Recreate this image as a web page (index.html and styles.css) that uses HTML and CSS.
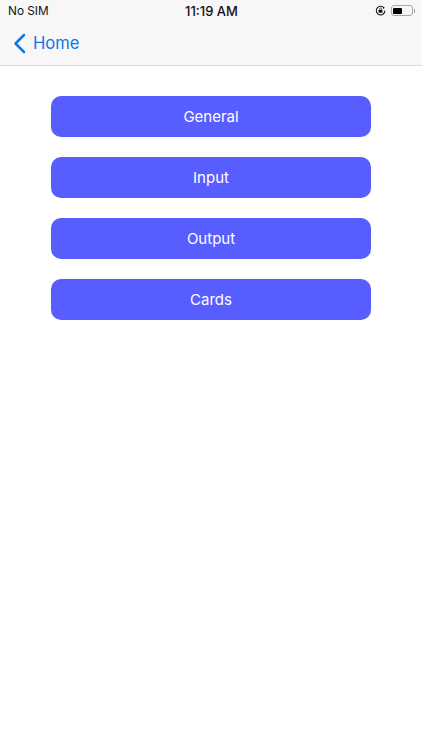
FILE: index.html
```html
<!DOCTYPE html>
<html lang="en">
<head>
<meta charset="utf-8">
<title>Home</title>
<link rel="stylesheet" href="styles.css">
</head>
<body>
<header class="top">
  <div class="status">
    <span class="carrier">No SIM</span>
    <span class="clock">11:19 AM</span>
    <span class="indicators">
      <svg class="lock" width="11" height="11" viewBox="0 0 12 12" aria-hidden="true">
        <path d="M9.6 3A4.7 4.7 0 1 0 10.8 6" fill="none" stroke="#111" stroke-width="1.1"/>
        <path d="M8.2 1.6l2.4 1-1.3 2.1z" fill="#111"/>
        <rect x="3.9" y="5.3" width="4.2" height="3.1" fill="#111"/>
        <path d="M4.9 5.3V4.4a1.1 1.1 0 0 1 2.2 0v.9" fill="none" stroke="#111" stroke-width=".7"/>
      </svg>
      <span class="battery"><span class="level"></span></span>
      <span class="nub"></span>
    </span>
  </div>
  <nav class="nav">
    <svg class="chevron" width="13" height="21" viewBox="0 0 13 21" aria-hidden="true">
      <path d="M11 2L2.5 10.5 11 19" fill="none" stroke="#0a7aeb" stroke-width="2.5" stroke-linecap="round" stroke-linejoin="round"/>
    </svg>
    <span class="back">Home</span>
  </nav>
</header>
<main class="menu">
  <button class="item">General</button>
  <button class="item">Input</button>
  <button class="item">Output</button>
  <button class="item">Cards</button>
</main>
</body>
</html>
```

FILE: styles.css
```css
* { box-sizing: border-box; }
html, body { margin: 0; padding: 0; }
body {
  width: 422px;
  height: 750px;
  background: #fff;
  font-family: Inter, "Liberation Sans", sans-serif;
  overflow: hidden;
}
.top {
  height: 66px;
  background: #f7f7f7;
  border-bottom: 1px solid #d9d9d9;
}
.status {
  height: 21px;
  padding: 0 7px 0 8px;
  display: grid;
  grid-template-columns: 1fr auto 1fr;
  align-items: center;
  font-size: 11.8px;
  color: #111;
}
.clock { font-size: 13px; font-weight: 500; }
.indicators {
  display: flex;
  align-items: center;
  justify-content: flex-end;
}
.lock { margin-right: 5px; }
.battery {
  width: 22px;
  height: 11px;
  padding: 1.5px;
  border: 1px solid #a8a8a8;
  border-radius: 3px;
  display: flex;
}
.level { width: 9px; background: #000; border-radius: 1px; }
.nub { width: 1.5px; height: 4px; margin-left: 1px; background: #a8a8a8; }
.nav {
  height: 44px;
  padding-left: 13px;
  display: flex;
  align-items: center;
  gap: 7px;
}
.back { font-size: 16.6px; color: #0a7aeb; }
.menu {
  padding: 30px 51px 0;
  display: flex;
  flex-direction: column;
  gap: 20px;
}
.item {
  height: 41px;
  border: 0;
  border-radius: 10px;
  background: #585dff;
  color: #fff;
  font: 400 15px Inter, "Liberation Sans", sans-serif;
}
```
